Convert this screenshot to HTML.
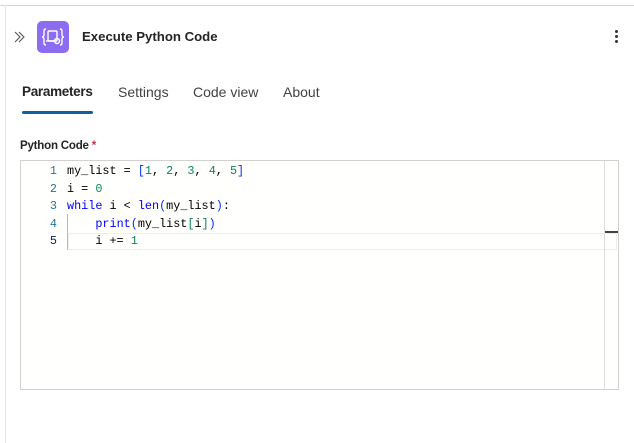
<!DOCTYPE html>
<html><head><style>
body{margin:0;width:634px;height:443px;background:#fff;position:relative;overflow:hidden;font-family:"Segoe UI","Liberation Sans",sans-serif;color:#242424}
.topline{position:absolute;left:0;top:5px;width:634px;height:1px;background:#d6d6d6}
.leftline{position:absolute;left:5px;top:5px;width:1px;height:438px;background:#e6e6e6}
.t{position:absolute;white-space:nowrap}
.code{font-family:"Liberation Mono",monospace;font-size:11.8px;position:absolute;white-space:pre;color:#000}
.ln{position:absolute;left:30px;width:27px;text-align:right;font-family:"Liberation Mono",monospace;font-size:11.8px;color:#237893}
.kw{color:#0000ff}.num{color:#098658}.br{color:#0431fa}
</style></head><body>
<div class="topline"></div><div class="leftline"></div>
<svg style="position:absolute;left:14px;top:31px" width="12" height="12" viewBox="0 0 12 12" fill="none" stroke="#555" stroke-width="1.1"><path d="M1 1l5 5l-5 5M5 1l5 5l-5 5"/></svg>
<div style="position:absolute;left:37px;top:21px;width:32px;height:32px;border-radius:5px;background:#8c6cf0">
<svg width="32" height="32" viewBox="0 0 32 32" fill="none" stroke="#fff" stroke-width="1.4">
<path d="M9 8c-2 0-2 1-2 3v3c0 1-1 2-2 2c1 0 2 1 2 2v3c0 2 0 3 2 3"/>
<path d="M23 8c2 0 2 1 2 3v3c0 1 1 2 2 2c-1 0-2 1-2 2v3c0 2 0 3-2 3"/>
<rect x="11" y="10" width="9" height="10" rx="1"/><path d="M9 20h9"/><circle cx="20" cy="20" r="2.5"/></svg></div>
<div class="t" style="left:82px;top:29px;font-size:13.2px;font-weight:600">Execute Python Code</div>
<div class="t" style="left:615px;top:30px;width:4px">
<div style="width:3px;height:3px;background:#333;border-radius:2px;margin-bottom:2px"></div><div style="width:3px;height:3px;background:#333;border-radius:2px;margin-bottom:2px"></div><div style="width:3px;height:3px;background:#333;border-radius:2px"></div></div>
<div class="t" style="left:22px;top:84px;font-size:13.5px;font-weight:600;letter-spacing:-0.3px">Parameters</div>
<div class="t" style="left:118px;top:84px;font-size:14px;color:#424242">Settings</div>
<div class="t" style="left:193px;top:84px;font-size:14px;color:#424242">Code view</div>
<div class="t" style="left:283px;top:84px;font-size:14px;color:#424242">About</div>
<div style="position:absolute;left:22px;top:111px;width:71px;height:3px;border-radius:2px;background:#115ea3"></div>
<div class="t" style="left:20px;top:140px;font-size:11.5px;font-weight:600;letter-spacing:-0.2px">Python Code <span style="color:#c4314b">*</span></div>
<div style="position:absolute;left:20px;top:160px;width:597px;height:228px;border:1px solid #d1d1d1;background:#fffffd"></div>
<div style="position:absolute;left:604px;top:161px;width:1px;height:228px;background:#ddd"></div>
<div style="position:absolute;left:68px;top:233px;width:547px;height:15px;border:1px solid #eee"></div>
<div style="position:absolute;left:605px;top:231px;width:13px;height:2px;background:#444"></div>
<div style="position:absolute;left:67px;top:214px;width:1px;height:36px;background:#bbb"></div>
<div class="ln" style="top:164px">1</div><div class="ln" style="top:182px">2</div><div class="ln" style="top:199px">3</div><div class="ln" style="top:217px">4</div><div class="ln" style="top:234px;color:#0b216f">5</div>
<div class="code" style="left:67px;top:164px">my_list = <span class="br">[</span><span class="num">1</span>, <span class="num">2</span>, <span class="num">3</span>, <span class="num">4</span>, <span class="num">5</span><span class="br">]</span></div>
<div class="code" style="left:67px;top:182px">i = <span class="num">0</span></div>
<div class="code" style="left:67px;top:199px"><span class="kw">while</span> i &lt; <span class="kw">len</span><span class="br">(</span>my_list<span class="br">)</span>:</div>
<div class="code" style="left:67px;top:217px">    <span class="kw">print</span><span class="br">(</span>my_list<span class="num">[</span>i<span class="num">]</span><span class="br">)</span></div>
<div class="code" style="left:67px;top:234px">    i += <span class="num">1</span></div>
</body></html>
